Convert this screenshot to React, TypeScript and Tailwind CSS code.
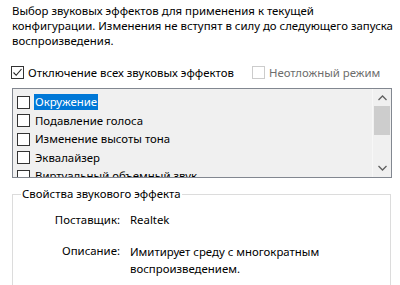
import React from "react";

const items = [
  "Окружение",
  "Подавление голоса",
  "Изменение высоты тона",
  "Эквалайзер",
  "Виртуальный объемный звук",
];

function Box({ checked, disabled }: { checked?: boolean; disabled?: boolean }) {
  return (
    <span
      className={
        "w-[13px] h-[13px] border flex items-center justify-center shrink-0 bg-white " +
        (disabled ? "border-[#cccccc]" : "border-[#333333]")
      }
    >
      {checked && (
        <svg width="11" height="11" viewBox="0 0 11 11">
          <path d="M1.5 5.5 L4.2 8.3 L9.5 2" fill="none" stroke="#222" strokeWidth="1.1" />
        </svg>
      )}
    </span>
  );
}

export default function App() {
  return (
    <div
      className="w-[400px] h-[285px] bg-white text-black overflow-hidden text-[11.4px] leading-[15px] whitespace-nowrap"
      style={{ fontFamily: '"Noto Sans", "Open Sans", sans-serif' }}
    >
      <div className="pl-[12px] pt-[3px] pr-[4px]">
        <p className="leading-[15px]">
          Выбор звуковых эффектов для применения к текущей
          <br />
          конфигурации. Изменения не вступят в силу до следующего запуска
          <br />
          воспроизведения.
        </p>
        <div className="flex items-center mt-[17px] h-[15px]">
          <div className="flex items-center gap-[4px] ml-[-1px]">
            <Box checked />
            <span>Отключение всех звуковых эффектов</span>
          </div>
          <div className="flex items-center gap-[4px] ml-[18px] text-[#6d6d6d]">
            <Box disabled />
            <span>Неотложный режим</span>
          </div>
        </div>
        <div className="mt-[8px] w-[380px] h-[90px] border border-[#828790] bg-[#f0f0f0] flex">
          <div className="flex-1 overflow-hidden pt-[4px] pl-[4px]">
            {items.map((t, i) => (
              <div key={t} className="flex items-center h-[18.5px] gap-[4px]">
                <Box />
                <span
                  className={
                    "px-[1px] h-[16px] leading-[16px] " +
                    (i === 0 ? "bg-[#0078d7] text-white" : "")
                  }
                >
                  {t}
                </span>
              </div>
            ))}
          </div>
          <div className="w-[19px] flex flex-col bg-[#f0f0f0] border-l border-[#f7f7f7]">
            <div className="h-[17px] flex items-center justify-center">
              <svg width="9" height="6" viewBox="0 0 9 6">
                <path d="M0.5 5 L4.5 1 L8.5 5" fill="none" stroke="#606060" strokeWidth="1.3" />
              </svg>
            </div>
            <div className="h-[29px] bg-[#cdcdcd] mx-[1px]" />
            <div className="flex-1" />
            <div className="h-[19px] flex items-center justify-center">
              <svg width="9" height="6" viewBox="0 0 9 6">
                <path d="M0.5 1 L4.5 5 L8.5 1" fill="none" stroke="#606060" strokeWidth="1.3" />
              </svg>
            </div>
          </div>
        </div>
        <div className="relative mt-[16px] w-[379px] h-[120px] border border-[#dcdcdc]">
          <span className="absolute left-[8px] top-[-9px] bg-white px-[1px]">
            Свойства звукового эффекта
          </span>
          <div className="pt-[17px] grid grid-cols-[107px_1fr] gap-x-[10px]">
            <span className="text-right">Поставщик:</span>
            <span>Realtek</span>
            <span className="text-right mt-[16px]">Описание:</span>
            <span className="mt-[16px] leading-[17px]">
              Имитирует среду с многократным
              <br />
              воспроизведением.
            </span>
          </div>
        </div>
      </div>
    </div>
  );
}
